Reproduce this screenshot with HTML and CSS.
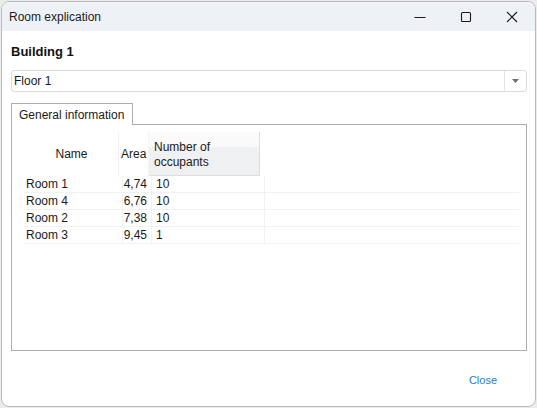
FILE: index.html
```html
<!DOCTYPE html>
<html>
<head>
<meta charset="utf-8">
<link rel="stylesheet" href="styles.css">
</head>
<body>
<div class="window">
  <div class="titlebar">
    <span class="title">Room explication</span>
    <div class="controls">
      <span class="ctl"><svg width="12" height="12" viewBox="0 0 12 12"><path d="M0.5 6.5H11.5" stroke="#1a1a1a" stroke-width="1"/></svg></span>
      <span class="ctl"><svg width="12" height="12" viewBox="0 0 12 12"><rect x="1.5" y="1.5" width="9" height="9" rx="1" fill="none" stroke="#1a1a1a" stroke-width="1.1"/></svg></span>
      <span class="ctl"><svg width="12" height="12" viewBox="0 0 12 12"><path d="M1 1L11 11M11 1L1 11" stroke="#1a1a1a" stroke-width="1.1"/></svg></span>
    </div>
  </div>
  <div class="content">
    <div class="heading">Building 1</div>
    <div class="combo">
      <span class="combo-text">Floor 1</span>
      <span class="combo-btn"><svg width="7" height="4" viewBox="0 0 7 4"><path d="M0 0H7L3.5 4Z" fill="#707070"/></svg></span>
    </div>
    <div class="tabs">
      <div class="tab">General information</div>
    </div>
    <div class="panel">
      <div class="grid">
        <div class="hrow">
          <div class="hcell h-name">Name</div>
          <div class="hcell h-area">Area</div>
          <div class="hcell h-num">Number of<br>occupants</div>
        </div>
        <div class="row">
          <div class="cell c-name">Room 1</div>
          <div class="cell c-area">4,74</div>
          <div class="cell c-num">10</div>
        </div>
        <div class="row">
          <div class="cell c-name">Room 4</div>
          <div class="cell c-area">6,76</div>
          <div class="cell c-num">10</div>
        </div>
        <div class="row">
          <div class="cell c-name">Room 2</div>
          <div class="cell c-area">7,38</div>
          <div class="cell c-num">10</div>
        </div>
        <div class="row">
          <div class="cell c-name">Room 3</div>
          <div class="cell c-area">9,45</div>
          <div class="cell c-num">1</div>
        </div>
      </div>
    </div>
    <div class="footer">
      <span class="close-btn">Close</span>
    </div>
  </div>
</div>
</body>
</html>
```

FILE: styles.css
```css
html, body {
  margin: 0;
  padding: 0;
}
body {
  width: 537px;
  height: 408px;
  background: #ececec;
  font-family: "Liberation Sans", Arial, sans-serif;
  font-size: 12px;
  color: #1a1a1a;
  overflow: hidden;
}
.window {
  box-sizing: border-box;
  margin: 1px 0 0 1px;
  width: 535px;
  height: 406px;
  border: 1px solid #b9b9b9;
  border-radius: 8px;
  background: #ffffff;
  overflow: hidden;
  display: flex;
  flex-direction: column;
}
.titlebar {
  height: 29px;
  background: #eef2f7;
  display: flex;
  align-items: center;
  justify-content: space-between;
  padding-left: 7px;
  flex: none;
}
.title {
  color: #1c1c1c;
  font-size: 12px;
  margin-top: 1px;
}
.controls {
  display: flex;
  align-items: center;
  height: 100%;
}
.ctl {
  width: 46px;
  height: 100%;
  display: flex;
  align-items: center;
  justify-content: center;
}
.ctl svg { display: block; margin-top: 1px; }
.content {
  flex: 1;
  display: flex;
  flex-direction: column;
  padding: 0 8px 0 9px;
}
.heading {
  font-weight: bold;
  font-size: 13px;
  line-height: 16px;
  margin-top: 13px;
  color: #111;
}
.combo {
  margin-top: 10px;
  height: 22px;
  box-sizing: border-box;
  border: 1px solid #dadada;
  border-radius: 3px;
  display: flex;
  align-items: center;
}
.combo-text {
  flex: 1;
  padding-left: 2px;
}
.combo-btn {
  width: 21px;
  height: 100%;
  border-left: 1px solid #e3e3e3;
  display: flex;
  align-items: center;
  justify-content: center;
}
.combo-btn svg { display: block; }
.tabs {
  margin-top: 11px;
  display: flex;
  position: relative;
  z-index: 1;
}
.tab {
  box-sizing: border-box;
  height: 22px;
  border: 1px solid #acacac;
  border-bottom: none;
  background: #ffffff;
  padding: 3px 8px 0 7px;
  line-height: 16px;
  white-space: nowrap;
}
.panel {
  box-sizing: border-box;
  margin-top: -1px;
  height: 227px;
  border: 1px solid #acacac;
  padding: 7px 7px 0 12px;
}
.grid {
  display: flex;
  flex-direction: column;
}
.hrow {
  display: flex;
  height: 44px;
}
.hcell {
  box-sizing: border-box;
  display: flex;
  align-items: center;
}
.h-name {
  width: 95px;
  justify-content: center;
  padding-left: 1px;
  border-right: 1px solid #f2f2f2;
}
.h-area {
  width: 30px;
  padding-left: 2px;
  border-right: 1px solid #f4f4f4;
}
.h-num {
  width: 111px;
  align-items: flex-start;
  padding: 8px 0 0 5px;
  line-height: 14.5px;
  background: linear-gradient(#fbfbfb 0, #f9f9fa 36%, #f0f1f3 36%, #eff0f2 100%);
  border-right: 1px solid #dedede;
  border-bottom: 1px solid #dedede;
}
.row {
  display: flex;
  height: 17px;
  box-sizing: border-box;
  border-bottom: 1px solid #f1f1f1;
}
.cell {
  box-sizing: border-box;
  line-height: 16px;
}
.c-name {
  width: 99px;
  padding-left: 2px;
  border-right: 1px solid #f1f1f1;
}
.c-area {
  width: 29px;
  text-align: right;
  padding-right: 4px;
  border-right: 1px solid #f1f1f1;
}
.c-num {
  width: 113px;
  padding-left: 4px;
  border-right: 1px solid #f1f1f1;
}
.footer {
  flex: 1;
  display: flex;
  justify-content: flex-end;
  align-items: center;
  padding-right: 30px;
}
.close-btn {
  color: #2b7bd6;
  font-size: 11px;
  margin-top: 2px;
}
```
